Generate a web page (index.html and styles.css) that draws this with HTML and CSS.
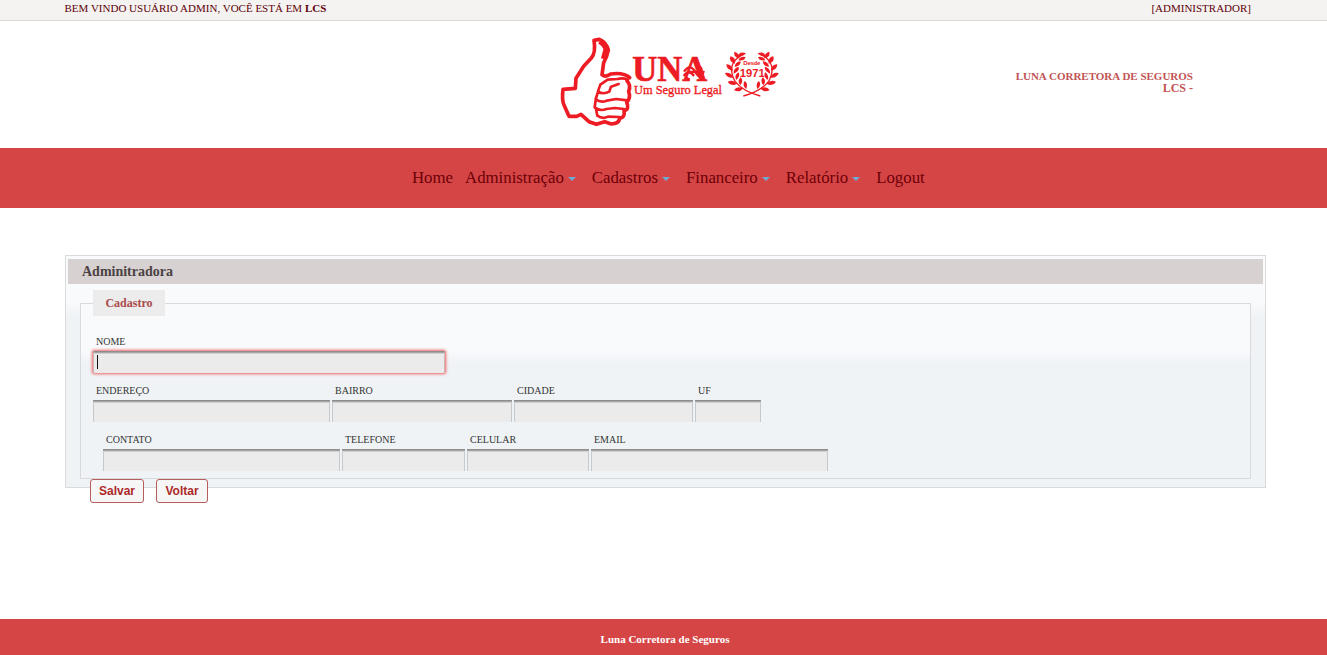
FILE: index.html
```html
<!DOCTYPE html>
<html lang="pt-BR">
<head>
<meta charset="utf-8">
<title>Luna Corretora de Seguros</title>
<link rel="stylesheet" href="styles.css">
</head>
<body>
<div class="topbar"><span>BEM VINDO USUÁRIO ADMIN, VOCÊ ESTÁ EM <b>LCS</b></span><span>[ADMINISTRADOR]</span></div>
<header class="header">
  <svg class="logo" viewBox="0 0 690 315" role="img" aria-label="Luna">
    <g fill="none" stroke="#ed1c24" stroke-linejoin="round" stroke-linecap="round">
      <path stroke-width="11" d="M132 31L148 28Q169 37 175 60Q171 82 161 98L156 134Q166 143 182 132Q220 126 239 143M132 31Q138 68 124 84L101 109L78 145L76 175L39 178Q35 210 42 225L57 259L80 259L93 253L117 275L139 283L164 275L184 282Q207 282 209 265Q226 262 222 243Q239 238 230 217Q243 205 236 184Q244 165 231 153"/>
      <path stroke-width="8" d="M234 149Q218 142 202 147L173 149L151 164L144 184Q158 195 178 185L183 170L206 162M144 186L137 207Q151 220 170 212L199 207L231 211M137 210L134 232Q151 245 169 237L194 234L222 237M138 237L142 257Q157 268 174 260L208 261"/>
      <path stroke-width="17" stroke-linecap="butt" d="M149 33Q166 43 169 58L161 87"/>
    </g>
    <g class="logo-text">
      <text class="logo-name" x="247" y="154" textLength="225" lengthAdjust="spacingAndGlyphs">UNA</text>
      <path class="flourish" d="M402 125Q420 98 437 127T461 122M401 138Q416 116 432 138M405 142l14 7M437 111q19-4 18 12"/>
      <text class="logo-tag" x="252" y="191" textLength="264" lengthAdjust="spacingAndGlyphs">Um Seguro Legal</text>
      <text class="logo-since" x="580" y="106" textLength="51">Desde</text>
      <text class="logo-year" x="569" y="141" textLength="75" lengthAdjust="spacingAndGlyphs">1971</text>
    </g>
    <defs>
      <g id="branch" fill="#ed1c24">
        <path d="M579 73Q526 100 555 154Q579 184 631 198" fill="none" stroke="#ed1c24" stroke-width="4"/>
        <path d="M588 70q-18-8-24 7q14 6 24-7M569 85q-3-18-16-20q-4 18 16 20M565 91q18 3 22-10q-16-4-22 10M555 101q3-20-14-22q-5 17 14 22M554 111q19-3 18-17q-17 2-18 17M549 122q-4-20-20-19q1 18 20 19M551 131q19-8 15-21q-17 5-15 21M551 143q-10-19-26-14q6 17 26 14M559 150q14-13 6-23q-14 10-6 23M562 161q-15-15-29-5q10 15 29 5M571 166q11-15 1-24q-12 11-1 24M580 175q-19-9-28 5q16 10 28-5M589 177q6-18-5-24q-9 14 5 24"/>
      </g>
    </defs>
    <use href="#branch"/>
    <use href="#branch" transform="matrix(-1 0 0 1 1211 0)"/>
  </svg>
  <div class="company"><div>LUNA CORRETORA DE SEGUROS</div><div class="code">LCS -</div></div>
</header>
<nav class="nav">
  <a>Home</a><a class="drop">Administração</a><a class="drop">Cadastros</a><a class="drop">Financeiro</a><a class="drop">Relatório</a><a>Logout</a>
</nav>
<main class="main">
  <section class="panel">
    <h1 class="panel-title">Adminitradora</h1>
    <div class="group">
      <div class="legend">Cadastro</div>
      <div class="row">
        <label class="field nome">NOME<input class="active"></label>
      </div>
      <div class="row">
        <label class="field w237">ENDEREÇO<input></label>
        <label class="field w180">BAIRRO<input></label>
        <label class="field w179">CIDADE<input></label>
        <label class="field w66">UF<input></label>
      </div>
      <div class="row indent">
        <label class="field w237">CONTATO<input></label>
        <label class="field w123">TELEFONE<input></label>
        <label class="field w122">CELULAR<input></label>
        <label class="field w237">EMAIL<input></label>
      </div>
    </div>
  </section>
  <div class="actions"><button class="save">Salvar</button><button class="back">Voltar</button></div>
</main>
<footer class="footer">Luna Corretora de Seguros</footer>
</body>
</html>
```
FILE: styles.css
```css
* { box-sizing: border-box; }
body {
  margin: 0;
  height: 655px;
  display: flex;
  flex-direction: column;
  overflow: hidden;
  background: #fff;
  font-family: "Liberation Serif", serif;
}
.topbar {
  height: 21px;
  flex: none;
  display: flex;
  justify-content: space-between;
  padding: 2px 76px 0 64.5px;
  background: #f4f3f1;
  border-bottom: 1px solid #dbd9d6;
  color: #600008;
  font-size: 11px;
  line-height: 13px;
}
.header {
  height: 127px;
  flex: none;
  display: flex;
  justify-content: space-between;
  padding: 9px 134px 0 550px;
}
.logo { width: 230px; height: 105px; }
.logo-text { fill: #ed1c24; font-family: "Liberation Serif", serif; }
.logo-name { font-size: 108px; font-weight: bold; stroke: #ed1c24; stroke-width: 2px; }
.logo-tag { font-size: 38px; stroke: #ed1c24; stroke-width: 1px; }
.logo-since { font: bold 18px "Liberation Sans", sans-serif; }
.logo-year { font: bold 33px "Liberation Sans", sans-serif; }
.flourish { fill: none; stroke: #ed1c24; stroke-width: 7px; }
.company {
  padding-top: 40px;
  text-align: right;
  color: #c25353;
  font-size: 11px;
  font-weight: bold;
  line-height: 12px;
}
.code { font-size: 12px; }
.nav {
  height: 60px;
  flex: none;
  display: flex;
  align-items: center;
  padding-left: 412px;
  gap: 12px;
  background: #d64545;
  color: #6d0008;
  font-size: 16.8px;
}
.nav a { display: flex; align-items: center; }
.drop::after {
  content: "";
  margin: 1px 4px 0;
  border: 4px solid transparent;
  border-top-color: #6eaad1;
  border-bottom: 0;
}
.main { flex: 1; padding: 47px 61px 0 65px; }
.panel {
  height: 233px;
  padding: 3px 2px 0;
  border: 1px solid #dadadc;
  background: linear-gradient(#f9fafc 0, #f9fafc 46px, #eff3f6 62px);
}
.panel-title {
  margin: 0;
  height: 25px;
  padding-left: 14px;
  background: #d7d1d1;
  color: #4a4242;
  font-size: 14px;
  line-height: 26px;
}
.group {
  height: 176px;
  margin: 19px 12px 0;
  padding-left: 12px;
  border: 1px solid #dadadc;
  background: linear-gradient(#f9fafc 0, #f9fafc 47px, #eff3f6 59px);
}
.legend {
  width: 72px;
  height: 26px;
  margin: -14px 0 20px;
  background: #ececec;
  color: #a94b4b;
  font-size: 12px;
  font-weight: bold;
  line-height: 26px;
  text-align: center;
}
.row { display: flex; gap: 2px; height: 49px; }
.indent { padding-left: 10px; }
.field {
  display: flex;
  flex-direction: column;
  color: #333;
  font-size: 10px;
  line-height: 11px;
  text-indent: 3px;
}
.field input {
  width: 100%;
  height: 22px;
  margin: 4px 0 0;
  padding: 0;
  border: 0;
  border-radius: 0;
  outline: 0;
  background: #ebebeb;
  box-shadow: inset 0 1px #8c8e8f, inset 0 2px #a5a5a5, inset 0 3px #d0d0d0, inset 1px 0 #c5c9cc, inset -1px 0 #c5c9cc;
}
.field .active {
  border-radius: 1px;
  background: linear-gradient(#111, #111) 4px 4px / 1px 14px no-repeat #ebebeb;
  box-shadow: inset 0 1px #8c8e8f, inset 0 2px #a5a5a5, inset 0 3px #d0d0d0, inset 1px 0 #cbb5b5, inset -1px 0 #cbb5b5, 0 0 3px 1px #f06060;
}
.row .field { padding-top: 0; padding-bottom: 0; }
.row { padding-top: 0; }
.nome { width: 352px; }
.w237 { width: 237px; }
.w180 { width: 180px; }
.w179 { width: 179px; }
.w66 { width: 66px; }
.w123 { width: 123px; }
.w122 { width: 122px; }
.actions {
  position: relative;
  display: flex;
  gap: 12px;
  margin-top: -9px;
  padding-left: 25px;
}
.actions button {
  height: 24px;
  padding: 0;
  border: 1px solid #b65e5e;
  border-radius: 3px;
  background: #f6f6f6;
  color: #ac2929;
  font: bold 12px "Liberation Sans", sans-serif;
}
.save { width: 54px; }
.back { width: 52px; }
.footer {
  height: 36px;
  flex: none;
  padding-left: 3px;
  background: #d64545;
  color: #fff;
  font-size: 11px;
  font-weight: bold;
  line-height: 40px;
  text-align: center;
}
```
